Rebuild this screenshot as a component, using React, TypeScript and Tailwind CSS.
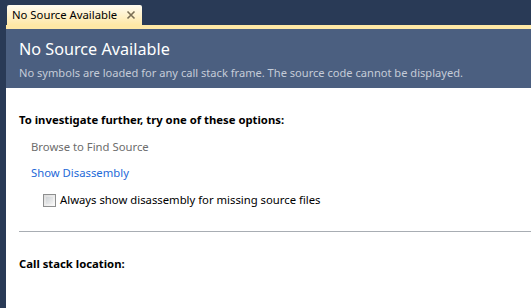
import React from "react";

export default function App() {
  const font = { fontFamily: '"Noto Sans", "Open Sans", sans-serif' };
  return (
    <div className="w-[531px] h-[308px] bg-[#293a56] flex overflow-hidden" style={font}>
      <div className="w-[6px] shrink-0" />
      <div className="flex-1 flex flex-col min-w-0">
        <div className="h-[25px] flex items-end pl-[1px]">
          <div className="h-[20px] w-[135px] bg-gradient-to-b from-[#fffbf0] to-[#ffe8a6] rounded-t-[2px] flex items-center pl-[5px] pr-[6px]">
            <span className="text-[11.3px] text-black leading-none whitespace-nowrap">No Source Available</span>
            <svg className="ml-auto" width="10" height="10" viewBox="0 0 10 10">
              <path d="M1.5 1.5 L8.5 8.5 M8.5 1.5 L1.5 8.5" stroke="#7a6e55" strokeWidth="1.6" />
            </svg>
          </div>
        </div>
        <div className="h-[4px] bg-[#ffe8a6]" />
        <div className="h-[59px] bg-[#4b5f80] pl-[13px] pt-[9px]">
          <div className="text-[16.2px] text-white leading-[22px] whitespace-nowrap">No Source Available</div>
          <div className="text-[11.1px] text-[#c5ccd8] leading-[16px] mt-[5px] whitespace-nowrap">
            No symbols are loaded for any call stack frame. The source code cannot be displayed.
          </div>
        </div>
        <div className="flex-1 bg-white pl-[13px] pt-[24px]">
          <div className="text-[11.3px] font-bold text-black leading-[16px] whitespace-nowrap">To investigate further, try one of these options:</div>
          <div className="pl-[12px] mt-[11px] text-[11.3px] text-[#6d6d6d] leading-[16px]">Browse to Find Source</div>
          <div className="pl-[12px] mt-[10px] text-[11.3px] text-[#1e6ad8] leading-[16px]">Show Disassembly</div>
          <div className="pl-[24px] mt-[11px] flex items-center gap-[4px]">
            <div className="w-[13px] h-[13px] border border-[#8e8f8f] bg-gradient-to-br from-[#dcdcdc] to-[#fbfbfb] p-[2px]">
              <div className="w-full h-full bg-gradient-to-br from-[#cfd3d6] to-[#f2f2f2]" />
            </div>
            <span className="text-[11.3px] text-black leading-[16px] whitespace-nowrap">Always show disassembly for missing source files</span>
          </div>
          <div className="mt-[23px] h-px bg-[#a8adb3]" />
          <div className="mt-[24px] text-[11.3px] font-bold text-black leading-[16px]">Call stack location:</div>
        </div>
      </div>
    </div>
  );
}
